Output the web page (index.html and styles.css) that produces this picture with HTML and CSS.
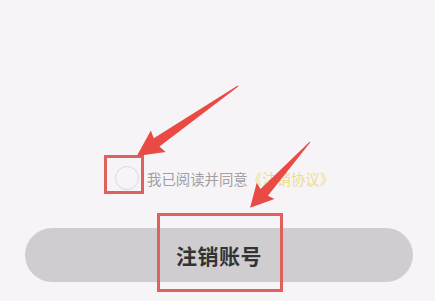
FILE: index.html
```html
<!DOCTYPE html>
<html lang="zh">
<head>
  <meta charset="UTF-8">
  <title>注销账号</title>
  <link rel="stylesheet" href="styles.css">
</head>
<body>
  <main class="page">
    <div class="agree">
      <span class="check"></span>
      <span class="agree-text">我已阅读并同意<span class="link">《注销协议》</span></span>
    </div>
    <button class="btn">注销账号</button>

    <svg class="marks" width="435" height="301" viewBox="0 0 435 301">
      <rect x="105.5" y="156.5" width="37" height="36" fill="none" stroke="#e0605e" stroke-width="3"/>
      <rect x="158.5" y="214.5" width="123" height="76" fill="none" stroke="#e0605e" stroke-width="3"/>
      <g fill="#ea4a44">
        <polygon transform="translate(238 86) rotate(145.3)" points="0,-0.5 99,-5 97,-13 123,0 97,13 99,5 0,0.5"/>
        <polygon transform="translate(310 142) rotate(132.3)" points="0,-0.5 68,-5 66,-12 89,0 66,12 68,5 0,0.5"/>
      </g>
    </svg>
  </main>
</body>
</html>
```

FILE: styles.css
```css
body { margin: 0; background: #f7f4f7; font-family: "Noto Sans CJK SC", "Noto Sans", sans-serif; }
.page { position: relative; width: 435px; height: 301px; padding-top: 166px; box-sizing: border-box; overflow: hidden; }
.agree { display: flex; align-items: center; gap: 8px; padding-left: 115px; height: 24px; }
.check { width: 22px; height: 22px; border: 1px solid #dcd9dc; border-radius: 50%; }
.agree-text { font-size: 14.4px; color: #a19ea1; white-space: nowrap; }
.link { color: #eddc8c; }
.btn { display: block; width: 388px; height: 54px; margin: 38px 0 0 25px; border: none; border-radius: 27px; background: #d0cdd1; color: #333; font-family: inherit; font-size: 21px; font-weight: bold; letter-spacing: 0.5px; }
.marks { position: absolute; left: 0; top: 0; pointer-events: none; }
```
